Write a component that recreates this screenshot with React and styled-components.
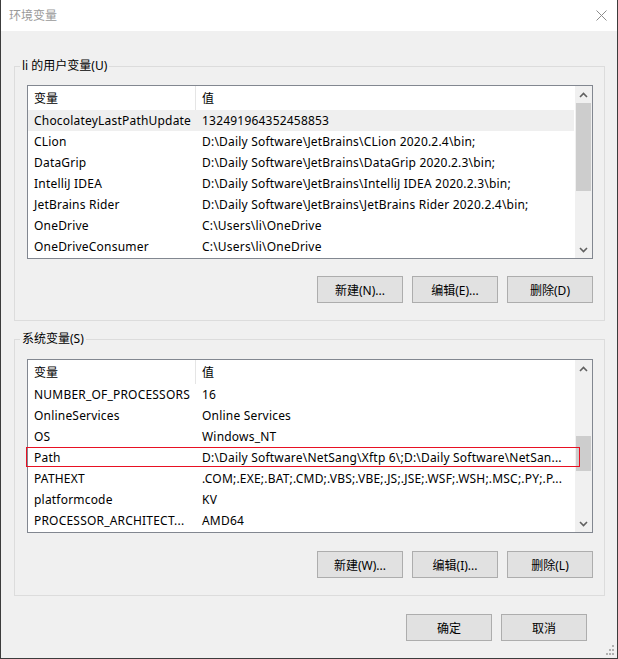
import React from "react";
import styled, { createGlobalStyle } from "styled-components";

const GlobalStyle = createGlobalStyle`
  html, body { margin: 0; padding: 0; background: #f0f0f0; }
  body {
    font-family: "Noto Sans", "Noto Sans CJK SC", sans-serif;
    font-size: 12px;
    color: #000;
  }
  * { box-sizing: border-box; }
`;

const Window = styled.div`
  position: relative;
  width: 618px;
  height: 659px;
  display: flex;
  flex-direction: column;
  background: #f0f0f0;
  border: 1px solid #3c3c3c;
  border-top: none;
  overflow: hidden;
`;

const TitleBar = styled.div`
  height: 31px;
  flex: none;
  background: #fff;
  display: flex;
  align-items: center;
  justify-content: space-between;
  padding: 0 10px 0 8px;
`;

const Title = styled.span`
  color: #999;
  font-size: 12px;
  line-height: 16px;
`;

const Body = styled.div`
  display: flex;
  flex-direction: column;
  padding: 27px 12px 0 13px;
`;

const Group = styled.fieldset`
  margin: ${(p) => p.$mt || 0}px 0 0 0;
  padding: 0;
  border: 1px solid #dcdcdc;
  min-width: 0;
`;

const Legend = styled.legend`
  margin-left: 5px;
  padding: 0 2px;
  font-size: 12px;
  line-height: 16px;
`;

const GroupContent = styled.div`
  display: flex;
  flex-direction: column;
  padding: ${(p) => p.$pt}px 11px ${(p) => p.$pb}px 12px;
  gap: ${(p) => p.$gap}px;
`;

const ListBox = styled.div`
  height: 174px;
  border: 1px solid #828790;
  background: #fff;
  display: flex;
`;

const ListContent = styled.div`
  flex: 1;
  min-width: 0;
  display: flex;
  flex-direction: column;
  padding-right: 1px;
`;

const HeaderRow = styled.div`
  height: 24px;
  display: flex;
  flex: none;
`;

const HeaderCell = styled.div`
  display: flex;
  align-items: center;
  padding-left: 6px;
  ${(p) => (p.$first ? "width: 168px; flex: none; border-right: 1px solid #e5e5e5;" : "flex: 1;")}
`;

const Row = styled.div`
  position: relative;
  height: 21px;
  flex: none;
  display: flex;
  align-items: center;
  background: ${(p) => (p.$selected ? "#efefef" : "transparent")};
`;

const Cell = styled.div`
  padding-left: 6px;
  white-space: nowrap;
  overflow: hidden;
  line-height: 21px;
  letter-spacing: 0.2px;
  ${(p) => (p.$first ? "width: 168px; flex: none;" : "flex: 1; min-width: 0;")}
`;

const Highlight = styled.div`
  position: absolute;
  left: -2px;
  top: 0;
  width: 554px;
  height: 20px;
  border: 1px solid #e81123;
  pointer-events: none;
`;

const ScrollBar = styled.div`
  width: 17px;
  flex: none;
  background: #f0f0f0;
  display: flex;
  flex-direction: column;
`;

const ArrowBtn = styled.div`
  height: 17px;
  flex: none;
  display: flex;
  align-items: center;
  justify-content: center;
`;

const Track = styled.div`
  flex: 1;
  display: flex;
  flex-direction: column;
`;

const Thumb = styled.div`
  margin: 0 1px;
  background: #cdcdcd;
  flex: none;
`;

const ButtonRow = styled.div`
  display: flex;
  justify-content: flex-end;
  gap: 9px;
  padding-right: ${(p) => p.$pr || 0}px;
  margin-top: ${(p) => p.$mt || 0}px;
`;

const Button = styled.button`
  width: 86px;
  height: 27px;
  padding: 0;
  background: #e1e1e1;
  border: 1px solid #adadad;
  border-radius: 0;
  font-family: "Noto Sans", "Noto Sans CJK SC", sans-serif;
  font-size: 12px;
  color: #000;
`;

const Grip = styled.svg`
  position: absolute;
  right: 2px;
  bottom: 2px;
`;

const Chevron = ({ up }) => (
  <svg width="9" height="6" viewBox="0 0 9 6">
    <path
      d={up ? "M1 5 L4.5 1.5 L8 5" : "M1 1 L4.5 4.5 L8 1"}
      fill="none"
      stroke="#606060"
      strokeWidth="1.6"
    />
  </svg>
);

const VarList = ({ rows, thumbTop, thumbHeight, highlight }) => (
  <ListBox>
    <ListContent>
      <HeaderRow>
        <HeaderCell $first>变量</HeaderCell>
        <HeaderCell>值</HeaderCell>
      </HeaderRow>
      {rows.map(([k, v], i) => (
        <Row key={k} $selected={rows.selectedIndex === i}>
          <Cell $first>{k}</Cell>
          <Cell>{v}</Cell>
          {highlight === i && <Highlight />}
        </Row>
      ))}
    </ListContent>
    <ScrollBar>
      <ArrowBtn>
        <Chevron up />
      </ArrowBtn>
      <Track>
        <Thumb style={{ marginTop: thumbTop, height: thumbHeight }} />
      </Track>
      <ArrowBtn>
        <Chevron />
      </ArrowBtn>
    </ScrollBar>
  </ListBox>
);

const userRows = [
  ["ChocolateyLastPathUpdate", "132491964352458853"],
  ["CLion", "D:\\Daily Software\\JetBrains\\CLion 2020.2.4\\bin;"],
  ["DataGrip", "D:\\Daily Software\\JetBrains\\DataGrip 2020.2.3\\bin;"],
  ["IntelliJ IDEA", "D:\\Daily Software\\JetBrains\\IntelliJ IDEA 2020.2.3\\bin;"],
  ["JetBrains Rider", "D:\\Daily Software\\JetBrains\\JetBrains Rider 2020.2.4\\bin;"],
  ["OneDrive", "C:\\Users\\li\\OneDrive"],
  ["OneDriveConsumer", "C:\\Users\\li\\OneDrive"],
];
userRows.selectedIndex = 0;

const sysRows = [
  ["NUMBER_OF_PROCESSORS", "16"],
  ["OnlineServices", "Online Services"],
  ["OS", "Windows_NT"],
  ["Path", "D:\\Daily Software\\NetSang\\Xftp 6\\;D:\\Daily Software\\NetSan..."],
  ["PATHEXT", ".COM;.EXE;.BAT;.CMD;.VBS;.VBE;.JS;.JSE;.WSF;.WSH;.MSC;.PY;.P..."],
  ["platformcode", "KV"],
  ["PROCESSOR_ARCHITECT...", "AMD64"],
];
sysRows.selectedIndex = -1;

export default function App() {
  return (
    <>
      <GlobalStyle />
      <Window>
        <TitleBar>
          <Title>环境变量</Title>
          <svg width="11" height="11" viewBox="0 0 11 11">
            <path d="M0.5 0.5 L10.5 10.5 M10.5 0.5 L0.5 10.5" stroke="#8c8c8c" strokeWidth="1" fill="none" />
          </svg>
        </TitleBar>
        <Body>
          <Group>
            <Legend>li 的用户变量(U)</Legend>
            <GroupContent $pt={11} $pb={17} $gap={17}>
              <VarList rows={userRows} thumbTop={0} thumbHeight={88} />
              <ButtonRow>
                <Button>新建(N)...</Button>
                <Button>编辑(E)...</Button>
                <Button>删除(D)</Button>
              </ButtonRow>
            </GroupContent>
          </Group>
          <Group $mt={10}>
            <Legend>系统变量(S)</Legend>
            <GroupContent $pt={12} $pb={17} $gap={18}>
              <VarList rows={sysRows} thumbTop={59} thumbHeight={35} highlight={3} />
              <ButtonRow>
                <Button>新建(W)...</Button>
                <Button>编辑(I)...</Button>
                <Button>删除(L)</Button>
              </ButtonRow>
            </GroupContent>
          </Group>
          <ButtonRow $mt={18} $pr={18}>
            <Button>确定</Button>
            <Button>取消</Button>
          </ButtonRow>
        </Body>
        <Grip width="12" height="11" viewBox="0 0 12 11">
          {[
            [9, 0],
            [6, 4],
            [9, 4],
            [3, 8],
            [6, 8],
            [9, 8],
          ].map(([x, y]) => (
            <rect key={`${x}-${y}`} x={x} y={y} width="2" height="2" fill="#b0b0b0" />
          ))}
        </Grip>
      </Window>
    </>
  );
}
